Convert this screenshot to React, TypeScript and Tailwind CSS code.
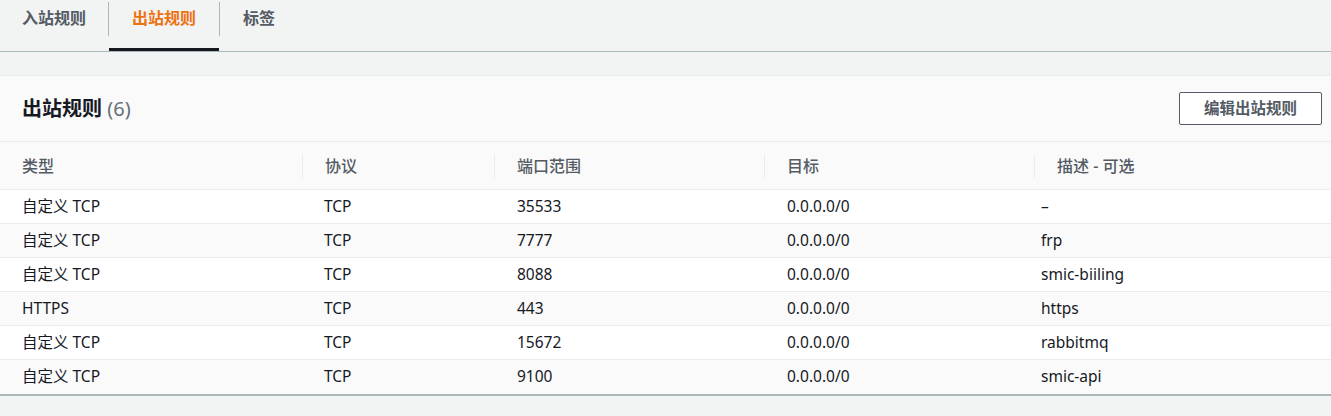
import React from 'react';

type Rule = {
  type: string;
  protocol: string;
  port: string;
  dest: string;
  desc: string;
};

const rules: Rule[] = [
  { type: '自定义 TCP', protocol: 'TCP', port: '35533', dest: '0.0.0.0/0', desc: '–' },
  { type: '自定义 TCP', protocol: 'TCP', port: '7777', dest: '0.0.0.0/0', desc: 'frp' },
  { type: '自定义 TCP', protocol: 'TCP', port: '8088', dest: '0.0.0.0/0', desc: 'smic-biiling' },
  { type: 'HTTPS', protocol: 'TCP', port: '443', dest: '0.0.0.0/0', desc: 'https' },
  { type: '自定义 TCP', protocol: 'TCP', port: '15672', dest: '0.0.0.0/0', desc: 'rabbitmq' },
  { type: '自定义 TCP', protocol: 'TCP', port: '9100', dest: '0.0.0.0/0', desc: 'smic-api' },
];

const cols = 'grid grid-cols-[302px_192px_270px_270px_1fr]';

export default function App() {
  return (
    <div
      className="w-[1331px] h-[416px] bg-[#f2f3f3] text-[15.5px] text-[#16191f] overflow-hidden"
      style={{ fontFamily: '"Noto Sans", "Noto Sans CJK SC", sans-serif' }}
    >
      {/* tabs */}
      <div className="h-[52px] flex items-start border-b border-[#aab7b8]">
        <div className="h-[51px] w-[108px] pl-[22px] pt-[6px] font-bold text-[16px] text-[#545b64]">入站规则</div>
        <div className="w-px h-[34px] mt-[2px] bg-[#aab7b8]" />
        <div className="h-[51px] w-[110px] flex justify-center pt-[6px] font-bold text-[16px] text-[#ec7211] border-b-[3px] border-[#16191f]">
          出站规则
        </div>
        <div className="w-px h-[34px] mt-[2px] bg-[#aab7b8]" />
        <div className="h-[51px] pl-[23px] pt-[6px] font-bold text-[16px] text-[#545b64]">标签</div>
      </div>

      {/* card */}
      <div className="mt-[23px] bg-[#fafafa] border-t border-[#eaeded] border-b-2 border-b-[#aab7b8]">
        <div className="h-[66px] flex items-center justify-between pl-[22px] pr-[9px] border-b border-[#eaeded]">
          <div className="text-[20px] font-bold">
            出站规则 <span className="font-normal text-[#687078]">(6)</span>
          </div>
          <button
            type="button"
            className="w-[143px] h-[33px] border border-[#545b64] rounded-[2px] bg-white font-bold text-[#545b64] text-[15.5px]"
          >
            编辑出站规则
          </button>
        </div>

        <div className={`${cols} h-[48px] items-center border-b border-[#eaeded] text-[#545b64] font-medium text-[16px]`}>
          {['类型', '协议', '端口范围', '目标', '描述 - 可选'].map((h, i) => (
            <div key={h} className={`flex items-center h-[24px] ${i === 0 ? 'pl-[22px]' : 'pl-[22px] border-l border-[#eaeded]'}`}>
              {h}
            </div>
          ))}
        </div>

        {rules.map((r, i) => (
          <div
            key={i}
            className={`${cols} h-[34px] items-center ${i < rules.length - 1 ? 'border-b border-[#eaeded]' : ''} ${
              i % 2 === 0 ? 'bg-white' : 'bg-[#fafafa]'
            }`}
          >
            <div className="pl-[22px]">{r.type}</div>
            <div className="pl-[22px]">{r.protocol}</div>
            <div className="pl-[23px]">{r.port}</div>
            <div className="pl-[23px]">{r.dest}</div>
            <div className="pl-[7px]">{r.desc}</div>
          </div>
        ))}
      </div>
    </div>
  );
}
